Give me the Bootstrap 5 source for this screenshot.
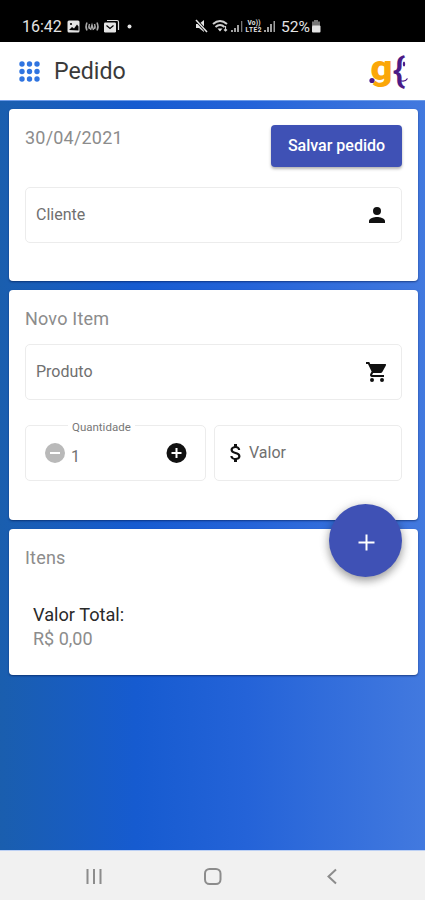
<!DOCTYPE html>
<html lang="pt-BR">
<head>
<meta charset="utf-8">
<meta name="viewport" content="width=device-width, initial-scale=1">
<title>Pedido</title>
<link href="https://cdn.jsdelivr.net/npm/bootstrap@5.3.0/dist/css/bootstrap.min.css" rel="stylesheet">
<style>
body{font-family:Roboto,"Liberation Sans",sans-serif;height:900px;overflow:hidden;color:#333}
svg{display:block;flex:none}
.status-bar{height:42px;background:#000;color:#e4e4e4;padding:11px 0 0 22px;font-size:16px}
.status-time{width:39px;white-space:nowrap;line-height:31px}
.app-header{height:58px;padding:0 15px 0 19px}
.app-title{font-size:23.2px;line-height:58px;margin-left:14px;color:#3a3a3a}
.workspace{height:751px;padding:8px 7px 0 9px;gap:9px;background:linear-gradient(90deg,#1a5eae 0%,#165bd0 32%,#2463d8 58%,#4279df 100%);border-top:1px solid #6d9be8;border-bottom:1px solid #bcd0f4}
.panel{border:0;border-radius:4px;padding:0 16px;box-shadow:0 1px 2px rgba(0,20,70,.55)}
.panel-client{height:172px;padding-top:16px}
.panel-item{height:230px;padding-top:18px}
.panel-list{height:146px;padding-top:18px}
.caption-text{font-size:18px;line-height:22px;letter-spacing:.2px;color:#8c8c8c}
.caption-date{margin-top:2px}
.btn-save{width:131px;height:42px;background:#3f51b5;color:#fff;font-size:16px;font-weight:500;border-radius:4px;padding:0;box-shadow:0 2px 3px rgba(0,0,0,.3)}
.btn-save:hover{background:#3f51b5;color:#fff}
.field{height:56px;border:1px solid #ececec;border-radius:5px;color:#707070;font-size:16px}
.field-wide{padding:0 12px 0 10px}
.field-client{margin-top:20px}
.field-product{margin-top:14px}
.field-pair{margin-top:25px}
.field-qty{width:181px;padding:0 17px}
.field-label{left:42px;top:-6px;background:#fff;font-size:11.5px;line-height:14px;padding:0 4px;color:#777}
.fab{width:73px;height:73px;right:16px;top:-25px;background:#3f51b5;border-radius:50%;box-shadow:0 4px 8px rgba(0,0,0,.32),0 1px 12px rgba(0,0,0,.12)}
.total-block{margin-top:34px}
.total-label{font-size:18.2px;line-height:24px;color:#2a2a2a}
.total-value{font-size:18px;line-height:24px;color:#8c8c8c}
.nav-keys{height:49px;background:#f1f1f1}
</style>
</head>
<body class="bg-white">
<div class="status-bar d-flex">
  <div class="status-time">16:42</div>
  <svg width="300" height="31" viewBox="61 11 300 31" fill="#e4e4e4" font-family="Roboto,sans-serif">
    <rect x="67.5" y="20.5" width="12" height="12" rx="1.5"/>
    <circle cx="71" cy="24" r="1.1" fill="#000"/><path d="M69 30l3-3 2 1.500 3-4 1.500 2v4z" fill="#000"/>
    <g fill="none" stroke="#a8a8a8" stroke-width="1.5"><path d="M87 22.500q-2 4 0 8M89.500 24q-1.200 2.500 0 5M97 22.500q2 4 0 8M94.500 24q1.200 2.500 0 5M90.500 30l1.500-5 1.500 5"/></g>
    <path d="M107 20.500h10q1.500 0 1.500 1.500v8" fill="none" stroke="#ddd" stroke-width="1.200"/>
    <rect x="104" y="22.500" width="12" height="10" rx="1.200"/><path d="M106.500 25.500l3.500 3 3.500-3" fill="none" stroke="#000" stroke-width="1.200"/>
    <circle cx="129.500" cy="26.500" r="2"/>
    <path d="M196 24h3l5-4v12l-5-4h-3z"/><path d="M196 20l11 12" stroke="#000" stroke-width="3"/><path d="M196 20l11 12" stroke="#e4e4e4" stroke-width="1.500"/>
    <g fill="none" stroke="#d0d0d0" stroke-width="2"><path d="M213 24q7-6 14 0M215.500 27q4.500-4 9 0"/><path d="M225.500 26v5m-1.500-1.500l1.500 1.500 1.500-1.500" stroke-width="1.200"/></g><path d="M217.500 28.500h5l-2.500 3z"/>
    <g fill="#a0a0a0"><rect x="231" y="30" width="2" height="2"/><rect x="234" y="28" width="2" height="4"/><rect x="237" y="25" width="2" height="7"/><rect x="241" y="21" width="1.300" height="11" fill="#777"/></g>
    <text x="247.500" y="25.300" font-size="6.500" font-weight="700" textLength="13">Vo))</text><text x="245.500" y="32.200" font-size="6.500" font-weight="700" textLength="16">LTE2</text>
    <g fill="#a0a0a0"><rect x="264" y="30" width="2" height="2"/><rect x="267" y="27" width="2" height="5"/><rect x="270" y="24" width="2" height="8"/><rect x="273.500" y="21" width="1.500" height="11"/></g>
    <text x="281" y="32" font-size="15.500" textLength="29" lengthAdjust="spacingAndGlyphs">52%</text>
    <path d="M314 20h4v1.500h2V26h-8v-4.500h2z" fill="#777"/><rect x="312" y="25.500" width="8.500" height="7" rx="1"/>
  </svg>
</div>

<header class="app-header bg-white d-flex align-items-center">
  <svg width="21" height="21" viewBox="0 0 21 21" fill="#2f74e0"><circle cx="3" cy="3" r="2.700"/><circle cx="10.500" cy="3" r="2.700"/><circle cx="18" cy="3" r="2.700"/><circle cx="3" cy="10.500" r="2.700"/><circle cx="10.500" cy="10.500" r="2.700"/><circle cx="18" cy="10.500" r="2.700"/><circle cx="3" cy="18" r="2.700"/><circle cx="10.500" cy="18" r="2.700"/><circle cx="18" cy="18" r="2.700"/></svg>
  <h1 class="app-title mb-0 fw-normal">Pedido</h1>
  <svg class="ms-auto" width="42" height="58" viewBox="368 42 42 58">
    <text x="370.500" y="80" font-family="Roboto,sans-serif" font-weight="900" font-size="35" textLength="22" lengthAdjust="spacingAndGlyphs" fill="#fba708">g</text>
    <circle cx="372" cy="80.500" r="2.600" fill="#4b1a87"/>
    <text x="392.500" y="82.500" font-family="Roboto,sans-serif" font-weight="500" font-size="35" textLength="13" lengthAdjust="spacingAndGlyphs" fill="#4b1a87">{</text>
    <ellipse cx="404" cy="64" rx="1.200" ry="2.500" fill="#4b1a87"/><path d="M400 80.500q5 2 7.500-2" fill="none" stroke="#4b1a87" stroke-width="1.300"/>
  </svg>
</header>

<main class="workspace d-flex flex-column">
  <section class="card panel panel-client">
    <div class="d-flex justify-content-between align-items-start">
      <div class="caption-text caption-date">30/04/2021</div>
      <button class="btn btn-save" type="button">Salvar pedido</button>
    </div>
    <div class="field field-wide field-client d-flex justify-content-between align-items-center">
      <span>Cliente</span>
      <svg width="24" height="24" viewBox="0 0 24 24" fill="#111"><path d="M12 12a4 4 0 1 0 0-8 4 4 0 0 0 0 8zm0 2c-2.670 0-8 1.340-8 4v2h16v-2c0-2.660-5.330-4-8-4z"/></svg>
    </div>
  </section>

  <section class="card panel panel-item">
    <div class="caption-text">Novo Item</div>
    <div class="field field-wide field-product d-flex justify-content-between align-items-center">
      <span>Produto</span>
      <svg width="24" height="24" viewBox="0 0 24 24" fill="#111"><path d="M7 18a2 2 0 1 0 0 4 2 2 0 0 0 0-4zM1 2v2h2l3.600 7.590-1.350 2.450C4.520 15.370 5.480 17 7 17h12v-2H7.420a.25.25 0 0 1-.22-.37L8.100 13h7.450c.75 0 1.410-.41 1.750-1.030l3.580-6.490A1 1 0 0 0 20 4H5.210l-.94-2zm16 16a2 2 0 1 0 0 4 2 2 0 0 0 0-4z"/></svg>
    </div>
    <div class="field-pair d-flex gap-2">
      <div class="field field-qty position-relative d-flex align-items-center">
        <span class="field-label position-absolute">Quantidade</span>
        <svg width="24" height="24" viewBox="0 0 24 24"><circle cx="12" cy="12" r="10" fill="#b9b9b9"/><path d="M7 12h10" stroke="#fff" stroke-width="2"/></svg>
        <span class="ms-1 pt-2">1</span>
        <svg class="ms-auto" width="24" height="24" viewBox="0 0 24 24"><circle cx="12.500" cy="12" r="10" fill="#111"/><path d="M7.500 12h10M12.500 7v10" stroke="#fff" stroke-width="2"/></svg>
      </div>
      <div class="field flex-grow-1 d-flex align-items-center px-2">
        <svg width="26" height="24" viewBox="-1 0 26 24" fill="#111"><path d="M11.800 10.900c-2.270-.59-3-1.200-3-2.150 0-1.090 1.010-1.850 2.700-1.850 1.780 0 2.440.85 2.500 2.100h2.210c-.07-1.720-1.120-3.300-3.210-3.810V3h-3v2.160c-1.940.42-3.500 1.680-3.500 3.610 0 2.310 1.910 3.460 4.700 4.130 2.500.6 3 1.480 3 2.410 0 .69-.49 1.790-2.700 1.790-2.060 0-2.870-.92-2.980-2.100h-2.200c.12 2.190 1.760 3.420 3.680 3.830V21h3v-2.150c1.950-.37 3.500-1.500 3.500-3.550 0-2.840-2.430-3.810-4.700-4.400z"/></svg>
        <span>Valor</span>
      </div>
    </div>
  </section>

  <section class="card panel panel-list position-relative">
    <div class="caption-text">Itens</div>
    <button class="fab btn position-absolute p-0 d-flex align-items-center justify-content-center" type="button" aria-label="Adicionar item">
      <svg width="24" height="24" viewBox="0 0 24 24"><path d="M4.500 13.500h16M12.500 5.500v16" stroke="#fff" stroke-width="2"/></svg>
    </button>
    <div class="total-block ms-2">
      <div class="total-label">Valor Total:</div>
      <div class="total-value">R$ 0,00</div>
    </div>
  </section>
</main>

<footer class="nav-keys">
  <svg width="425" height="49" viewBox="0 851 425 49" fill="none" stroke="#8c8c8c" stroke-width="2"><path d="M87.500 869v15M94 869v15M100.500 869v15"/><rect x="205" y="869" width="15.500" height="15" rx="4.500"/><path d="M336 869.500l-7.500 7 7.500 7"/></svg>
</footer>
<script src="https://cdn.jsdelivr.net/npm/bootstrap@5.3.0/dist/js/bootstrap.bundle.min.js"></script>
</body>
</html>
